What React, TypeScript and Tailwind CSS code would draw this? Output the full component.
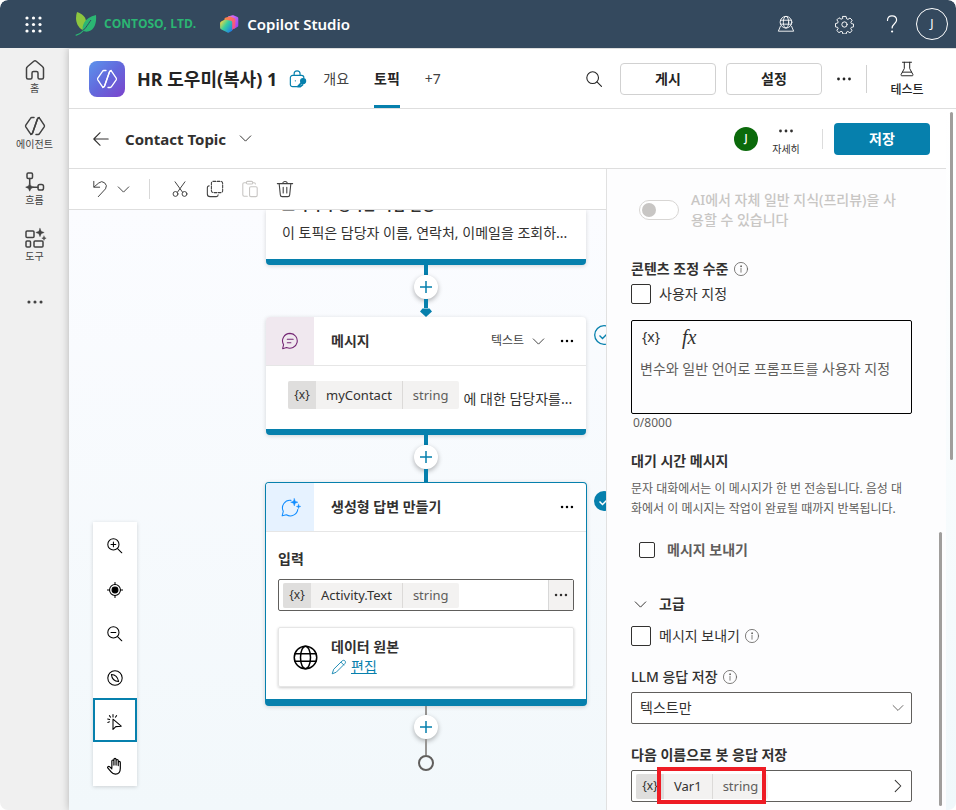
import React from 'react';

type IconProps = { size?: number; className?: string; children: React.ReactNode; sw?: number };

const Icon = ({ size = 20, className = '', children, sw = 1 }: IconProps) => (
  <svg
    width={size}
    height={size}
    viewBox="0 0 20 20"
    fill="none"
    stroke="currentColor"
    strokeWidth={sw}
    strokeLinecap="round"
    strokeLinejoin="round"
    className={`shrink-0 ${className}`}
    aria-hidden="true"
  >
    {children}
  </svg>
);

const Dots = ({ size = 20 }: { size?: number }) => (
  <Icon size={size}>
    <g fill="currentColor" stroke="none">
      <circle cx="4.5" cy="10" r="1.4" />
      <circle cx="10" cy="10" r="1.4" />
      <circle cx="15.5" cy="10" r="1.4" />
    </g>
  </Icon>
);

const Chevron = ({ size = 16, className = '' }: { size?: number; className?: string }) => (
  <Icon size={size} sw={1.3} className={className}>
    <path d="M3 6.5l7 7 7-7" />
  </Icon>
);

const Info = () => (
  <Icon size={16} className="text-[#605e5c]">
    <circle cx="10" cy="10" r="8.2" />
    <path d="M10 9v5" />
    <circle cx="10" cy="6.5" r=".6" fill="currentColor" />
  </Icon>
);

const AgentPaths = () => (
  <>
    <path d="M9 1.500H6.800c-.6 0-1 .3-1.300.8L.8 9.200c-.3.500-.3 1.100 0 1.600l4.200 6.400c.7 1.100 2 1 2.500-.2L12.300 3.200c.4-1.100 1-1.700 2-1.700" />
    <path d="M11 18.500h2.200c.6 0 1-.3 1.300-.8l4.700-6.900c.3-.5.3-1.100 0-1.600L15 2.800c-.7-1.100-2-1-2.500.2L7.700 16.800c-.4 1.100-1 1.700-2 1.700" />
  </>
);

const TopBar = () => (
  <header className="flex h-12 shrink-0 items-center rounded-t-lg bg-[#34495e] text-white">
    <button aria-label="앱 시작 관리자" className="ml-6 flex size-[19px] items-center justify-center">
      <svg width="17" height="17" viewBox="0 0 17 17" fill="currentColor">
        {[2, 8.5, 15].map((y) =>
          [2, 8.5, 15].map((x) => <circle key={`${x}-${y}`} cx={x} cy={y} r="1.6" />)
        )}
      </svg>
    </button>
    <a href="#" className="ml-8 flex items-center gap-[7px]">
      <svg width="22" height="24" viewBox="0 0 22 24" className="shrink-0">
        <path d="M2 0c6 2 9.500 6 9 11l-3.500 7C2 15-.5 8 2 0z" fill="#8cc63f" />
        <path d="M21 3c.8 8-1.500 15-8 16.500-2 .4-4 0-5-.7-1.600-4 1-13.500 13-15.800z" fill="#2bb673" />
        <path d="M16 8c-3 4-6.500 11.500-15 15.300" fill="none" stroke="#34495e" strokeWidth="1" />
        <path d="M8.500 18.500C6.500 21 4 22.500.7 23.300" fill="none" stroke="#2bb673" strokeWidth="1.200" />
      </svg>
      <span className="font-['Open_Sans',sans-serif] text-xs leading-5 font-bold whitespace-nowrap text-[#2bb673]">
        CONTOSO, LTD.
      </span>
    </a>
    <a href="#" className="ml-6 flex items-center gap-2 text-[15px] font-semibold whitespace-nowrap">
      <svg width="19" height="18" viewBox="0 0 19 18" className="shrink-0">
        <defs>
          <linearGradient id="cs1" x1="0" y1="0" x2="1" y2="1">
            <stop offset="0" stopColor="#e879f9" />
            <stop offset="1" stopColor="#8b3df0" />
          </linearGradient>
          <linearGradient id="cs2" x1="0" y1="0" x2="1" y2="1">
            <stop offset="0" stopColor="#ff8a3c" />
            <stop offset="1" stopColor="#f0439c" />
          </linearGradient>
          <linearGradient id="cs3" x1="0" y1="0.200" x2="1" y2="1">
            <stop offset="0" stopColor="#f5d442" />
            <stop offset=".4" stopColor="#35d0a0" />
            <stop offset="1" stopColor="#1d6df2" />
          </linearGradient>
        </defs>
        <path d="M8 1.500L12.500.3c.5-.1 1-.1 1.400.1L17.500 2c.6.300.8.800.8 1.400v7c0 .7-.3 1.200-1 1.600L14 14 8 6z" fill="url(#cs1)" />
        <path d="M4.500 3.800c0-.5.200-.9.700-1.100L9.500 1.600c.5-.1 1-.1 1.500.1l3.500 1.500c.6.300.9.700.9 1.400V12.500l-4 3L4.500 8z" fill="url(#cs2)" />
        <path d="M1.200 6.500L4.500 4.800c.4-.2.9-.2 1.400-.1l5.100 1.100c.8.200 1.200.7 1.200 1.500v8.500L9 17.600c-.5.300-1 .3-1.500 0L1 14.200c-.6-.3-.9-.8-.9-1.400V8.200c0-.8.400-1.300 1.100-1.700z" fill="url(#cs3)" />
      </svg>
      Copilot Studio
    </a>
    <div className="ml-auto flex items-center pr-2">
      <button aria-label="환경" className="flex size-10 items-center justify-center">
        <Icon size={18}>
          <circle cx="10" cy="8" r="6.500" />
          <ellipse cx="10" cy="8" rx="3" ry="6.500" />
          <path d="M4 5.800h12M4 10.200h12M3.800 12.500l-2.300 5.500h17l-2.300-5.500" />
        </Icon>
      </button>
      <button aria-label="설정" className="ml-[18px] flex size-10 items-center justify-center">
        <Icon size={19}>
          <circle cx="10" cy="10" r="2.800" />
          <path d="M8.300 1.500h3.400l.5 2.500 1.400.6 2.200-1.400 2.300 2.300-1.400 2.200.6 1.400 2.200.4v3l-2.300.5-.6 1.300 1.400 2.200-2.300 2.200-2.200-1.400-1.300.6-.5 2.100H8.300l-.5-2.200-1.400-.6-2.200 1.400-2.300-2.300 1.400-2.100-.5-1.200-2.300-.5V9l2.300-.5.5-1.300L2 5.100l2.200-2.200 2.200 1.500 1.400-.6z" />
        </Icon>
      </button>
      <button aria-label="도움말" className="ml-3 flex w-8 items-center justify-center">
        <Icon size={20} sw={1.2}>
          <path d="M5.500 6.500c0-3 1.800-4.700 4.500-4.700s4.600 1.700 4.600 4.200c0 3.600-4.500 3.900-4.500 8" />
          <circle cx="10.100" cy="17.500" r=".5" fill="currentColor" />
        </Icon>
      </button>
      <button className="ml-2 size-8 rounded-full border border-white text-xs">J</button>
    </div>
  </header>
);

const navItems = [
  {
    label: '홈',
    icon: <path d="M1.500 8.500c0-.7.300-1.300.8-1.700l6.500-5.600c.7-.6 1.700-.6 2.400 0l6.500 5.600c.5.400.8 1 .8 1.700V17.500c0 .9-.6 1.500-1.500 1.500h-2.500c-.9 0-1.500-.6-1.500-1.500v-4.500c0-.9-.6-1.500-1.500-1.500h-3c-.9 0-1.500.6-1.500 1.500v4.500c0 .9-.6 1.500-1.500 1.500H3c-.9 0-1.500-.6-1.500-1.500z" />,
  },
  { label: '에이전트', icon: <AgentPaths /> },
  {
    label: '흐름',
    icon: (
      <>
        <rect x="2" y="1" width="5.500" height="5.500" rx="1.200" />
        <rect x="13" y="12.500" width="5.500" height="5.500" rx="1.800" />
        <path d="M4.700 6.500v5M8 15.200h5" />
        <path d="M4.700 11.200l1.200 2.800 2.800 1.200-2.800 1.200-1.200 2.800-1.200-2.800-2.800-1.200L3.500 14z" fill="currentColor" strokeWidth=".6" />
      </>
    ),
  },
  {
    label: '도구',
    icon: (
      <>
        <rect x="1" y="3" width="8" height="6.500" rx="1" />
        <rect x="1" y="13" width="4.500" height="6" rx="1" />
        <rect x="9" y="13" width="9" height="6" rx="1" />
        <path d="M15 .3l1.200 3 3 1.200-3 1.200-1.200 3-1.200-3-3-1.200 3-1.200zM19 8l.6 1.600 1.600.6-1.600.6-.6 1.600-.6-1.600-1.600-.6 1.600-.6z" fill="currentColor" strokeWidth=".4" />
      </>
    ),
  },
];

const SideNav = () => (
  <nav className="flex w-[69px] shrink-0 flex-col items-center bg-[#f0f0f0] pt-3 text-[#424242]">
    {navItems.map((item) => (
      <a key={item.label} href="#" className="flex h-14 w-full flex-col items-center text-[10px] leading-4">
        <Icon size={20} sw={1.5} className="overflow-visible">{item.icon}</Icon>
        {item.label}
      </a>
    ))}
    <button aria-label="더 보기" className="mt-[7px]">
      <Dots size={22} />
    </button>
  </nav>
);

const AgentHeader = () => (
  <div className="flex h-[61px] shrink-0 items-center border-y border-[#dedede] bg-white pr-[25px] pl-5 text-[#242424]">
    <div className="flex size-9 shrink-0 items-center justify-center rounded-lg bg-linear-to-br from-[#5b93ec] via-[#6268dc] to-[#7a42cc] text-white">
      <Icon size={20} sw={1.3}><AgentPaths /></Icon>
    </div>
    <h1 className="ml-3 text-lg leading-6 font-bold whitespace-nowrap">HR 도우미(복사) 1</h1>
    <Icon size={18} sw={1.3} className="ml-3 overflow-visible text-[#0680ad]">
      <path d="M8.500 18.500H4A2.500 2.500 0 0 1 1.500 16V8.500A2.500 2.500 0 0 1 4 6h10a2.500 2.500 0 0 1 2.500 2.500M5.700 6V4.300a3.300 3.300 0 0 1 6.600 0V6M7 12h.1" />
      <circle cx="15.700" cy="12.300" r="2.800" fill="currentColor" />
      <path d="M14 14L9.800 18.500h2.700l2.500-2" strokeWidth="2" />
    </Icon>
    <div className="ml-4 flex h-full items-center gap-[25px] text-sm text-[#424242]">
      <a href="#" className="whitespace-nowrap">개요</a>
      <a href="#" className="flex h-full items-center border-b-3 border-[#0680ad] pt-[3px] font-bold whitespace-nowrap text-[#242424]">토픽</a>
      <button>+7</button>
    </div>
    <div className="ml-auto flex items-center">
      <button aria-label="검색" className="mr-[17px]">
        <Icon size={18} sw={1.2}>
          <circle cx="8.500" cy="8.500" r="6.500" />
          <path d="M13.300 13.300l5 5" />
        </Icon>
      </button>
      <button className="h-8 w-24 rounded border border-[#d1d1d1] text-sm font-semibold">게시</button>
      <button className="ml-[10px] h-8 w-24 rounded border border-[#d1d1d1] text-sm font-semibold">설정</button>
      <button aria-label="기타" className="ml-3"><Dots size={20} /></button>
      <div className="ml-3 h-7 border-l border-[#d1d1d1]" />
      <button className="ml-4 flex w-12 flex-col items-center gap-1 text-xs leading-4 font-medium whitespace-nowrap">
        <Icon size={18} sw={1.1}>
          <path d="M5 2.500h10M7 2.500v7L3.500 16c-.5 1 0 1.500 1 1.500h11c1 0 1.500-.5 1-1.500L13 9.500v-7M5 13.500h10" />
        </Icon>
        테스트
      </button>
    </div>
  </div>
);

const TopicHeader = () => (
  <div className="flex h-[60px] shrink-0 items-center border-b border-[#dedede] bg-white pr-4 pl-[23px] text-[#323130]">
    <button aria-label="뒤로">
      <Icon size={18} sw={1.2}><path d="M18 10H2M9 3l-7 7 7 7" /></Icon>
    </button>
    <h2 className="ml-[15px] text-[15px] leading-6 font-bold">Contact Topic</h2>
    <button aria-label="토픽 목록" className="ml-3"><Chevron size={15} /></button>
    <div className="ml-auto flex items-center">
      <span className="flex size-6 items-center justify-center rounded-full bg-[#0b6a0b] text-[10px] font-semibold text-white">J</span>
      <button className="ml-3 flex w-8 flex-col items-center text-[10px] leading-4 whitespace-nowrap">
        <Dots size={20} />
        자세히
      </button>
      <div className="ml-5 h-5 border-l border-[#dcdcdc]" />
      <button className="ml-[11px] h-8 w-24 rounded bg-[#0680ad] text-sm font-bold text-white">저장</button>
    </div>
  </div>
);

const Toolbar = () => (
  <div className="flex h-[41px] shrink-0 items-center border-b border-[#dedede] bg-white pl-[23px] text-[#424242]">
    <button aria-label="실행 취소">
      <Icon size={18} sw={1.1}><path d="M2 1.500v6.500h6.500M2.300 7.700L7.500 3.300a5 5 0 0 1 7.500 6.500L7 18.500" /></Icon>
    </button>
    <button aria-label="실행 취소 기록" className="ml-[6px]"><Chevron size={15} /></button>
    <div className="ml-[18px] h-5 border-l border-[#d8d8d8]" />
    <button aria-label="잘라내기" className="ml-[21px]">
      <Icon size={18} sw={1.1}>
        <path d="M4.500 2l8.300 11.500M15.500 2L7.200 13.500" />
        <circle cx="5" cy="15.500" r="2.700" />
        <circle cx="15" cy="15.500" r="2.700" />
      </Icon>
    </button>
    <button aria-label="복사" className="ml-[17px]">
      <Icon size={18} sw={1.2}>
        <rect x="6" y="1.500" width="12.500" height="12.500" rx="2" strokeDasharray="3 1.500" />
        <path d="M3.500 6.500c-1.200 0-2 .8-2 2v7c0 1.800 1.200 3 3 3h7c1.200 0 2-.8 2-2" />
      </Icon>
    </button>
    <button aria-label="붙여넣기" disabled className="ml-[17px] text-[#c8c6c4]">
      <Icon size={18} sw={1.2}>
        <path d="M6 3H3.500C2.500 3 2 3.500 2 4.500v12c0 1 .5 1.500 1.500 1.500H7M13 3h1.500c1 0 1.500.5 1.500 1.500" />
        <rect x="6" y="1.500" width="7" height="3" rx="1.200" />
        <rect x="9.500" y="7.500" width="8.500" height="11" rx="1.500" />
      </Icon>
    </button>
    <button aria-label="삭제" className="ml-[17px]">
      <Icon size={18} sw={1.2}>
        <path d="M1.500 4h17M7.500 4c0-3 5-3 5 0M3.500 4l1.300 12.500c.1 1.200.8 2 2 2h6.400c1.200 0 1.900-.8 2-2L16.500 4M8 8v6.500M12 8v6.500" />
      </Icon>
    </button>
  </div>
);

const Chip = ({ name, compact }: { name: string; compact?: boolean }) => (
  <span className={`flex shrink-0 items-center overflow-hidden rounded-xs bg-[#f3f2f1] text-[13px] whitespace-nowrap text-[#323130] ${compact ? 'h-[25px]' : 'h-7'}`}>
    <span className="flex h-full w-7 items-center justify-center bg-[#dfdedd] text-xs">{'{x}'}</span>
    <span className="px-[10px]">{name}</span>
    <span className="flex h-full items-center border-l border-[#dcdad8] px-[10px] text-[#605e5c]">string</span>
  </span>
);

const AddButton = () => (
  <button aria-label="노드 추가" className="flex size-6 items-center justify-center rounded-full bg-white text-[#0680ad] shadow-[0_2px_5px_rgba(0,0,0,0.300)]">
    <svg width="12" height="12" viewBox="0 0 12 12" stroke="currentColor" strokeWidth="1.500">
      <path d="M6 0v12M0 6h12" />
    </svg>
  </button>
);

const cardShadow = 'shadow-[0_1px_4px_rgba(0,0,0,0.160)]';

const Flow = () => (
  <div className="absolute top-0 left-[196px] flex w-[322px] flex-col items-center text-sm text-[#323130]">
    <section className={`w-[320px] rounded-b border-b-6 border-[#0680ad] bg-white ${cardShadow}`}>
      {/* scrolled so that only the lower edge of the title shows */}
      <div className="flex h-[49px] flex-col justify-end gap-2 overflow-hidden px-4 pb-4 leading-5">
        <h3 className="shrink-0 font-semibold">토픽이 수행하는 작업 설명</h3>
        <p className="shrink-0 whitespace-nowrap">이 토픽은 담당자 이름, 연락처, 이메일을 조회하...</p>
      </div>
    </section>
    <div className="h-[10px] w-1 bg-[#0680ad]" />
    <AddButton />
    <div className="h-[9px] w-1 bg-[#0680ad]" />
    <svg width="12" height="9" viewBox="0 0 12 9" fill="#0680ad">
      <path d="M2.500.5h7L12 3.500 6 9 0 3.500z" />
    </svg>

    <section className={`w-[320px] overflow-hidden rounded border-b-6 border-[#0680ad] bg-white ${cardShadow}`}>
      <div className="flex h-[49px] items-center border-b border-[#e6e6e6]">
        <div className="flex h-full w-12 items-center justify-center bg-[#f0e8ef] text-[#742774]">
          <Icon size={18} sw={1.2}>
            <path d="M10 1.500a8.300 8.300 0 1 1-3.800 15.800L1.800 18.500l1.100-4.400A8.300 8.300 0 0 1 10 1.500zM7 8h6.500M7 12h4" />
          </Icon>
        </div>
        <h3 className="ml-[17px] font-bold">메시지</h3>
        <button className="ml-auto flex items-center gap-[7px] text-xs text-[#424242]">
          텍스트 <Chevron size={15} />
        </button>
        <button aria-label="메시지 노드 옵션" className="mr-[10px] ml-3 text-black"><Dots size={18} /></button>
      </div>
      <div className="flex h-[63px] gap-[5px] pt-[15px] pr-3 pl-[22px]">
        <Chip name="myContact" />
        <span className="mt-[6px] leading-6 whitespace-nowrap">에 대한 담당자를...</span>
      </div>
    </section>
    <div className="h-[10px] w-1 bg-[#0680ad]" />
    <AddButton />
    <div className="h-[13px] w-1 bg-[#0680ad]" />

    <section className={`w-[322px] overflow-hidden rounded border border-b-7 border-[#0680ad] bg-white ${cardShadow}`}>
      <div className="flex h-[49px] items-center border-b border-[#e6e6e6]">
        <div className="flex h-full w-12 items-center justify-center bg-[#e6f2ff] text-[#118dff]">
          <Icon size={19} sw={1.1} className="overflow-visible">
            <path d="M10.500 2.500A8 8 0 0 0 2.400 14L1.200 18.800l4.500-1.100A8 8 0 0 0 17.700 12" />
            <path d="M14 .5l1 2.900 2.900 1L15 5.500l-1 2.900-1-2.900-2.900-1.100 2.900-1zM18.500 6.500l.6 1.800 1.800.6-1.800.6-.6 1.800-.6-1.800-1.800-.6 1.800-.6z" fill="currentColor" strokeWidth=".4" />
          </Icon>
        </div>
        <h3 className="ml-[17px] font-bold">생성형 답변 만들기</h3>
        <button aria-label="생성형 답변 노드 옵션" className="mr-[10px] ml-auto text-black"><Dots size={18} /></button>
      </div>
      <div className="px-3 pt-[17px] pb-3">
        <h4 className="leading-5 font-bold">입력</h4>
        <div className="mt-[10px] flex h-8 items-center justify-between rounded-xs border border-[#605e5c] pl-1">
          <Chip name="Activity.Text" compact />
          <button aria-label="입력 옵션" className="flex h-full w-[25px] items-center justify-center border-l border-[#d8d8d8] bg-[#f3f2f1]">
            <Dots size={18} />
          </button>
        </div>
        <div className="mt-4 flex h-[60px] items-center rounded-xs border border-[#e6e6e6] pl-[14px] shadow-[0_1px_3px_rgba(0,0,0,0.200)]">
          <Icon size={25} sw={1.2} className="text-black">
            <circle cx="10" cy="10" r="9" />
            <ellipse cx="10" cy="10" rx="4" ry="9" />
            <path d="M1.600 7h16.800M1.600 13h16.800" />
          </Icon>
          <div className="ml-[13px] leading-5">
            <div className="font-semibold">데이터 원본</div>
            <a href="#" className="flex items-center gap-1 text-[#0680ad]">
              <Icon size={16} sw={1.1}>
                <path d="M14 2.300c1-1 2.500-.9 3.400 0s1 2.400 0 3.400L6.500 16.600 1.500 18.500l1.700-5.200zM12.500 4l3.500 3.500" />
              </Icon>
              <span className="underline">편집</span>
            </a>
          </div>
        </div>
      </div>
    </section>
    <div className="h-[9px] w-[2px] bg-[#979593]" />
    <AddButton />
    <div className="h-4 w-[2px] bg-[#979593]" />
    <div className="size-4 rounded-full border-2 border-[#605e5c]" />
  </div>
);

const tools = [
  {
    label: '확대',
    icon: <><circle cx="8" cy="8" r="7" /><path d="M13.200 13.200l5.300 5.300M8 5v6M5 8h6" /></>,
  },
  {
    label: '가운데 맞춤',
    icon: (
      <>
        <circle cx="10" cy="10" r="6.800" />
        <circle cx="10" cy="10" r="3.700" fill="currentColor" />
        <path d="M10 .5v2.700M10 16.800v2.700M.5 10h2.700M16.800 10h2.700" />
      </>
    ),
  },
  {
    label: '축소',
    icon: <><circle cx="8" cy="8" r="7" /><path d="M13.200 13.200l5.300 5.300M5 8h6" /></>,
  },
  {
    label: '미니맵',
    icon: (
      <>
        <circle cx="10" cy="10" r="9" />
        <path d="M5.500 5.500c4.200 0 8 3.300 9 9-4.800-.3-8.500-3.700-9-9z" />
      </>
    ),
  },
  {
    label: '선택',
    active: true,
    icon: <path d="M7.500 6.500v12.800l3.500-3.500 6.800-.6zM7.500.7v3M3 2l1.500 2M12 2l-1.500 2M.8 6.300l2.500.7M1 10.500l2-.7" />,
  },
  {
    label: '이동',
    size: 18,
    icon: <path d="M6.500 12V4.500c0-1.600 2.300-1.600 2.300 0V9M8.800 4V2.700c0-1.600 2.400-1.600 2.400 0V9M11.200 4c0-1.600 2.400-1.600 2.400 0v5.500M13.600 6c0-1.500 2.300-1.500 2.300 0v6.500c0 4-2 6.500-5.400 6.500-2.300 0-3.600-.8-4.800-2.400L1.900 12c-.6-1 1-2 2-1.300l2.600 2.400" />,
  },
];

const CanvasTools = () => (
  <div className="absolute bottom-6 left-6 flex flex-col bg-white text-black shadow-[0_1px_4px_rgba(0,0,0,0.160)]">
    {tools.map((tool) => (
      <button
        key={tool.label}
        aria-label={tool.label}
        className={`flex size-11 items-center justify-center pt-1 ${tool.active ? 'border-2 border-[#0680ad]' : ''}`}
      >
        <Icon size={tool.size ?? 16} sw={1.3}>{tool.icon}</Icon>
      </button>
    ))}
  </div>
);

const Canvas = () => (
  <div className="relative min-h-0 flex-1 overflow-hidden bg-linear-to-b from-[#fbfcff] to-[#f2f8fb]">
    <Flow />
    {/* node status marks */}
    <svg width="20" height="20" viewBox="0 0 20 20" className="absolute top-[115px] left-[525px]" fill="none">
      <circle cx="10" cy="10" r="9.300" stroke="#0680ad" strokeWidth="1.300" />
      <path d="M5.500 10.500l3 3 6-6" stroke="#0680ad" strokeWidth="1.300" />
    </svg>
    <svg width="20" height="20" viewBox="0 0 20 20" className="absolute top-[281px] left-[525px]" fill="none">
      <circle cx="10" cy="10" r="10" fill="#0680ad" />
      <path d="M5.500 10.500l3 3 6-6" stroke="#fff" strokeWidth="1.500" />
    </svg>
    <CanvasTools />
  </div>
);

const boxClass = 'shrink-0 appearance-none rounded-xs border border-[#323130] bg-white';

const PropertiesPanel = () => (
  <aside className="relative w-[340px] shrink-0 overflow-hidden border-l border-[#e1e1e1] bg-[#fdfdfe] pt-[21px] pr-[34px] pl-6 text-sm leading-5 text-[#323130]">
    <label className="flex items-center gap-3 pr-3 pl-2 text-[#c8c6c4]">
      <span className="relative flex h-5 w-10 shrink-0">
        <input type="checkbox" role="switch" disabled className="size-full appearance-none rounded-full border border-[#d8d6d4] bg-white" />
        <span className="absolute top-[3px] left-[3px] size-[14px] rounded-full bg-[#c8c6c4]" />
      </span>
      <span className="font-medium">AI에서 자체 일반 지식(프리뷰)을 사용할 수 있습니다</span>
    </label>

    <h3 className="mt-[29px] flex items-center gap-[5px] font-semibold">콘텐츠 조정 수준 <Info /></h3>
    <label className="mt-[5px] flex items-center gap-2">
      <input type="checkbox" className={`size-5 ${boxClass}`} />
      사용자 지정
    </label>

    <div className="mt-4 h-[94px] rounded-xs border border-black px-2 pt-[6px]">
      <div className="flex h-5 items-center gap-5">
        <button aria-label="변수 삽입" className="w-[22px] text-sm">{'{x}'}</button>
        <button aria-label="수식 삽입" className="font-['Liberation_Serif','Noto_Sans_CJK_KR',serif] text-xl leading-5 italic">fx</button>
      </div>
      <textarea
        aria-label="프롬프트 사용자 지정"
        placeholder="변수와 일반 언어로 프롬프트를 사용자 지정"
        className="mt-3 block h-12 w-full resize-none overflow-hidden leading-5 placeholder:text-[#605e5c]"
      />
    </div>
    <div className="pl-[2px] text-xs leading-[18px] text-[#605e5c]">0/8000</div>

    <h3 className="mt-[19px] font-bold">대기 시간 메시지</h3>
    <p className="mt-2 text-xs leading-5 text-[#605e5c]">
      문자 대화에서는 이 메시지가 한 번 전송됩니다. 음성 대화에서 이 메시지는 작업이 완료될 때까지 반복됩니다.
    </p>
    <label className="mt-[21px] flex items-center gap-3 pl-2 font-semibold text-[#605e5c]">
      <input type="checkbox" className={`size-4 ${boxClass}`} />
      메시지 보내기
    </label>

    <button className="mt-[34px] flex items-center gap-[11px] pl-[2px] font-bold">
      <Chevron size={15} />
      고급
    </button>
    <label className="mt-3 flex items-center gap-2">
      <input type="checkbox" className={`size-5 ${boxClass}`} />
      <span className="flex items-center gap-1">메시지 보내기 <Info /></span>
    </label>

    <label htmlFor="llm" className="mt-[21px] flex items-center gap-1 font-medium">LLM 응답 저장 <Info /></label>
    <div className="relative mt-[5px]">
      <select id="llm" className="h-8 w-full appearance-none rounded-xs border border-[#605e5c] bg-white pl-2 text-sm text-[#323130]">
        <option>텍스트만</option>
      </select>
      <Chevron size={14} className="pointer-events-none absolute top-[9px] right-[7px] text-[#605e5c]" />
    </div>

    <h3 className="mt-[21px] font-semibold">다음 이름으로 봇 응답 저장</h3>
    <div className="relative mt-[5px] flex h-8 items-center justify-between rounded-xs border border-[#605e5c] bg-white pr-[5px] pl-1">
      <Chip name="Var1" compact />
      <button aria-label="변수 열기">
        <Chevron size={16} className="-rotate-90" />
      </button>
      <div className="pointer-events-none absolute -top-1 left-[25px] h-[37px] w-[109px] border-4 border-[#ee1c25]" />
    </div>
    <div className="absolute right-1 bottom-1 h-[274px] w-[3px] rounded-full bg-[#a09e9c]" />
  </aside>
);

const App: React.FC = () => (
  <div lang="ko" className="flex h-screen min-w-0 flex-col overflow-hidden rounded-lg bg-white font-['Noto_Sans','Noto_Sans_CJK_KR',sans-serif]">
    <TopBar />
    <div className="flex min-h-0 flex-1 overflow-hidden">
      <SideNav />
      <main className="flex min-w-0 flex-1 flex-col shadow-[0_0_8px_rgba(0,0,0,0.250)]">
        <AgentHeader />
        <div className="flex min-h-0 flex-1 bg-linear-to-b from-white to-[#f0f8fb]">
          <div className="flex min-w-0 flex-1 flex-col">
            <TopicHeader />
            <div className="flex min-h-0 flex-1">
              <div className="flex min-w-0 flex-1 flex-col">
                <Toolbar />
                <Canvas />
              </div>
              <PropertiesPanel />
            </div>
          </div>
          <div className="flex w-[10px] shrink-0 justify-center pt-[3px]">
            <div className="h-[348px] w-[3px] rounded-full bg-[#a09e9c]" />
          </div>
        </div>
      </main>
    </div>
  </div>
);

export default App;
